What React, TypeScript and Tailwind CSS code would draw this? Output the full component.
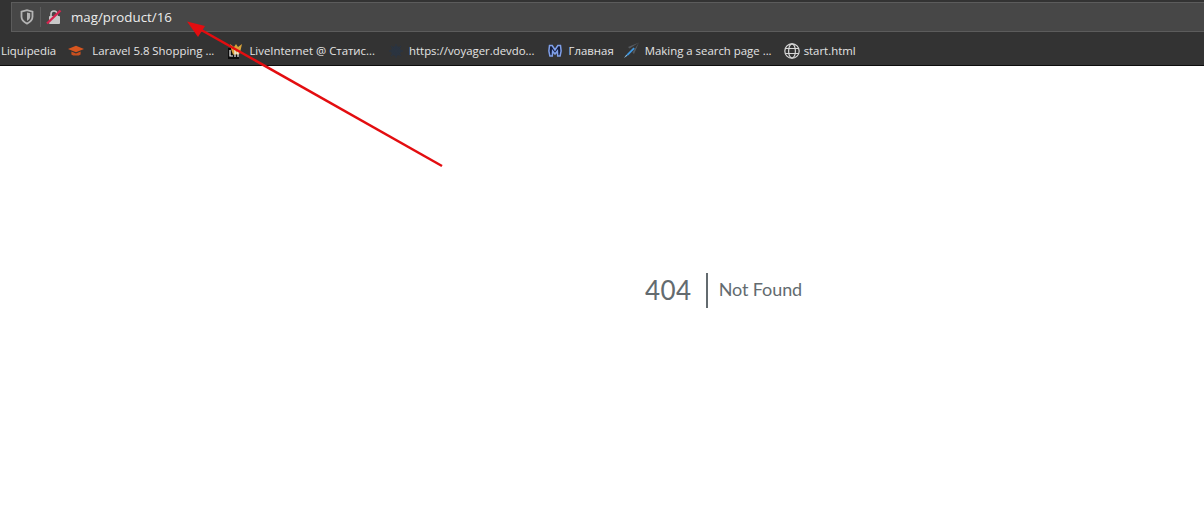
import React from 'react';

const bookmarkText = "text-[11.4px] leading-none text-[#e4e4e4] whitespace-nowrap";

const ShieldIcon = () => (
  <svg width="14" height="16" viewBox="0 0 14 16" fill="none">
    <path d="M1.500 2.600 7 1.200l5.500 1.400v5.200c0 3.200-2.400 5.400-5.500 6.800-3.100-1.400-5.500-3.600-5.500-6.800z" stroke="#b4b4b4" strokeWidth="1.800" />
    <path d="M7 3.500 10.200 4.300v3.400c0 1.800-1.400 3.200-3.200 4.200z" fill="#b4b4b4" />
  </svg>
);

const LockIcon = () => (
  <svg width="16" height="16" viewBox="0 0 16 16" fill="none">
    <path d="M5 7V5a3 3 0 0 1 6 0v2" stroke="#c9c9c9" strokeWidth="1.600" />
    <rect x="3" y="7" width="11" height="8" rx="1" fill="#c9c9c9" />
    <path d="M1 14.500 14.500 1.500" stroke="#d6244f" strokeWidth="2.400" />
  </svg>
);

const CapIcon = () => (
  <svg width="16" height="12" viewBox="0 0 16 12">
    <path d="M0 4 8 .8 16 4 8 7.200z" fill="#d8561f" />
    <path d="M3.400 6.600V9.400C5 11 11 11 12.600 9.400V6.600L8 8.500z" fill="#c9501f" />
  </svg>
);

const LiveInternetIcon = () => (
  <svg width="16" height="16" viewBox="0 0 16 16">
    <rect x="0" y="5" width="11" height="11" fill="#0c0c0c" />
    <path d="M2 1 6 4 8 1l2 3 4-3-1.500 6.500-1.500 4H5l-1.500-4z" fill="#d9a33a" />
    <path d="M2 7v6h3M7 7v7M10 7v7M7 10h3" stroke="#f1f1f1" strokeWidth="1.200" fill="none" />
  </svg>
);

const VoyagerIcon = () => (
  <svg width="16" height="16" viewBox="0 0 16 16">
    <circle cx="8" cy="8" r="5" fill="#2b3440" />
    <path d="M8 1v14M1 8h14M3 3l10 10M13 3 3 13" stroke="#2b3440" strokeWidth="1.400" />
  </svg>
);

const MIcon = () => (
  <svg width="16" height="14" viewBox="0 0 16 14" fill="none">
    <path d="M2.500 1.500h2.700L8 6l2.800-4.500h2.700c.8 3 .8 7-.4 10.500h-2.400l-.3-5L8 10 5.600 7l-.3 5H2.900C1.700 8.500 1.700 4.500 2.500 1.500z" fill="#141d3c" stroke="#7f9fe8" strokeWidth="1.500" />
  </svg>
);

const PenIcon = () => (
  <svg width="17" height="17" viewBox="0 0 17 17">
    <path d="M16 .5 5 5l1.500 1.500zM16 .5 11 12l-1.500-1.500z" fill="#565a5f" />
    <path d="M10.500 5.500 3.500 12.500l1.300 1.300 7-7z" fill="#3f97e0" />
    <path d="M3.300 12.700 1 16l3.300-2.300z" fill="#8cc8f5" />
  </svg>
);

const GlobeIcon = () => (
  <svg width="16" height="16" viewBox="0 0 16 16" fill="none" stroke="#d6d6d6" strokeWidth="1.200">
    <circle cx="8" cy="8" r="7.200" />
    <ellipse cx="8" cy="8" rx="3.400" ry="7.200" />
    <path d="M1.200 5.500h13.600M1.200 10.500h13.600" />
  </svg>
);

export default function App() {
  return (
    <div className="relative h-[506px] w-[1204px] overflow-hidden bg-white font-['Open_Sans','Noto_Sans',sans-serif]">
      {/* Address bar */}
      <div className="h-8 bg-[#333333] pl-[11px] pt-[2px]">
        <div className="flex h-[30px] items-center border-y border-l border-[#5c5c5c] bg-[#474747]">
          <div className="ml-2 flex h-5 w-[21px] items-center border-r border-[#5c5c5c]">
            <ShieldIcon />
          </div>
          <div className="ml-[5px]">
            <LockIcon />
          </div>
          <span className="ml-[9px] pt-[2px] text-[13.3px] leading-none text-[#ececec]">mag/product/16</span>
        </div>
      </div>

      {/* Bookmarks */}
      <div className="flex h-[34px] items-center border-b border-[#0d0d0d] bg-[#333333] pl-px pt-[4px]">
        <span className={bookmarkText}>Liquipedia</span>
        <span className="ml-3 flex"><CapIcon /></span>
        <span className={`${bookmarkText} ml-2`}>Laravel 5.8 Shopping ...</span>
        <span className="ml-[14px] flex"><LiveInternetIcon /></span>
        <span className={`${bookmarkText} ml-[5px]`}>LiveInternet @ Статис...</span>
        <span className="ml-[13px] flex"><VoyagerIcon /></span>
        <span className={`${bookmarkText} ml-[5px]`}>https://voyager.devdo...</span>
        <span className="ml-3 flex"><MIcon /></span>
        <span className={`${bookmarkText} ml-[6px]`}>Главная</span>
        <span className="ml-[9px] flex"><PenIcon /></span>
        <span className={`${bookmarkText} ml-[5px]`}>Making a search page ...</span>
        <span className="ml-3 flex"><GlobeIcon /></span>
        <span className={`${bookmarkText} ml-1`}>start.html</span>
      </div>

      {/* Page */}
      <div className="flex h-[440px] items-start justify-center pl-[243px] pt-[207px]">
        <div className="flex h-[35px] items-center text-[#636b6f]">
          <span className="border-r-2 border-[#636b6f] pr-[14px] font-['Lato',sans-serif] text-[26px] leading-[35px] tracking-[0.5px]">404</span>
          <span className="pb-[2px] pl-[11px] font-['Lato',sans-serif] text-[18px] tracking-[-0.1px]">Not Found</span>
        </div>
      </div>

      {/* Red annotation arrow */}
      <svg className="absolute left-0 top-0" width="1204" height="506" fill="none">
        <path d="M442 166 196 27" stroke="#e30d10" strokeWidth="2.500" />
        <path d="M187 21.500 205 26 198 37z" fill="#e30d10" />
      </svg>
    </div>
  );
}
